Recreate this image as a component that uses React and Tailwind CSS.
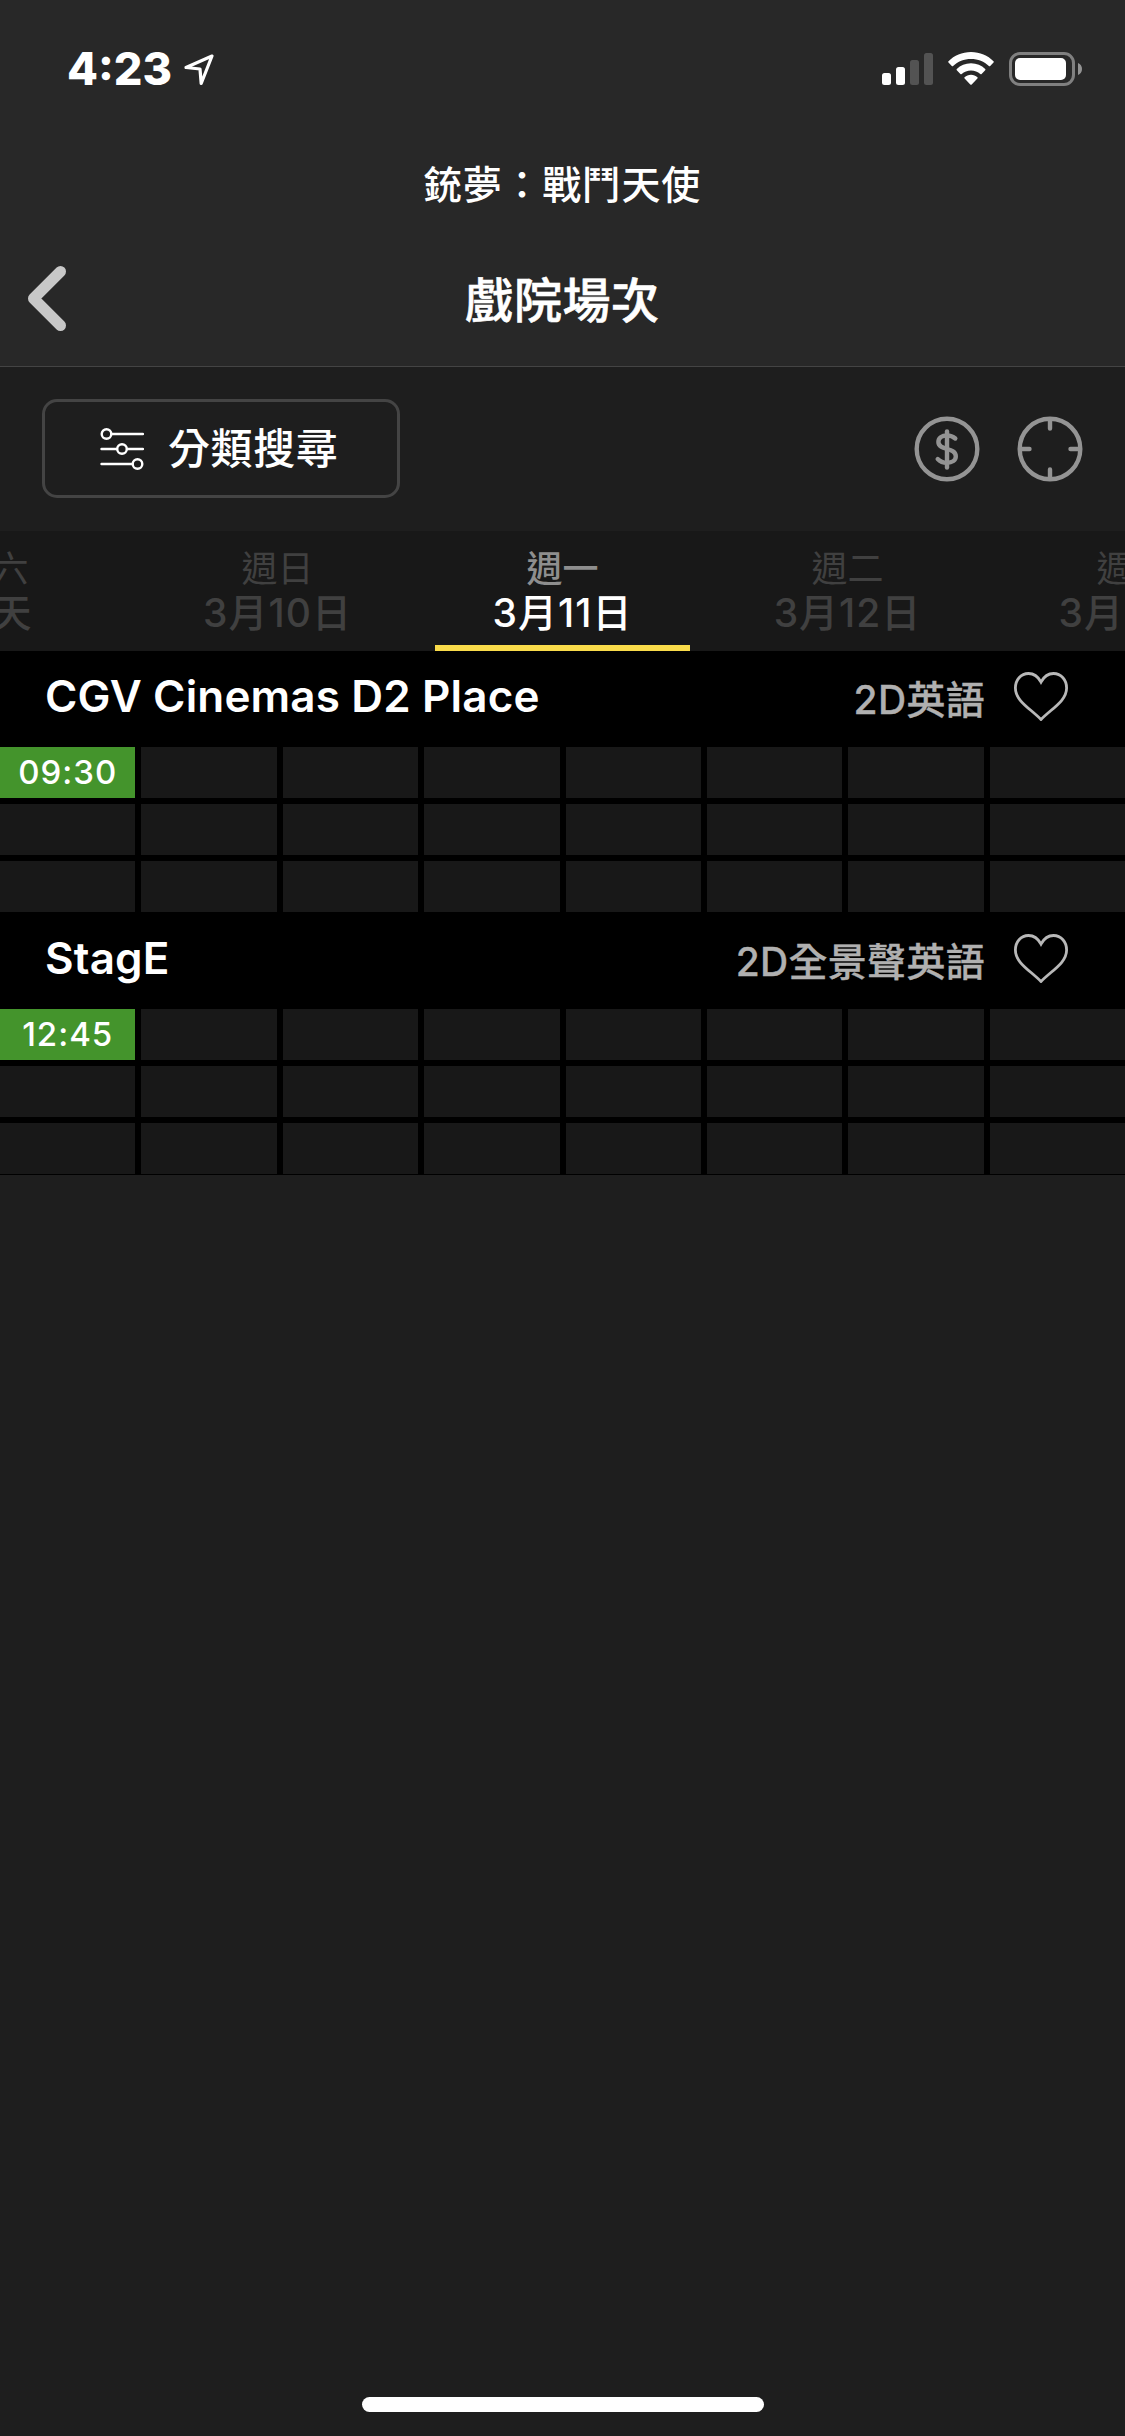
const days = [
  { weekday: '週六', date: '今天' },
  { weekday: '週日', date: '3月10日' },
  { weekday: '週一', date: '3月11日', active: true },
  { weekday: '週二', date: '3月12日' },
  { weekday: '週三', date: '3月13日' },
];

const cinemas = [
  { name: 'CGV Cinemas D2 Place', format: '2D英語', times: ['09:30'] },
  { name: 'StagE', format: '2D全景聲英語', times: ['12:45'] },
];

const SLOTS = 24;

function StatusBar() {
  return (
    <div className="flex h-[138px] items-start justify-between pt-[46px] pr-[42px] pl-[67px]">
      <div className="flex items-center">
        <span className="w-[106px] text-[45px] leading-[46px] font-extrabold whitespace-nowrap">4:23</span>
        <svg className="ml-[9px] h-[34px] w-[34px]" viewBox="0 0 34 34" fill="none" stroke="#fff" strokeWidth="3.2" strokeLinejoin="round">
          <path d="M30 4 4 15.500l14 1.500 1.200 14.500z" />
        </svg>
      </div>
      <div className="flex items-start pt-[6px]">
        <svg className="h-[34px] w-[51px]" viewBox="0 0 51 34" fill="#fff">
          <rect x="0" y="21" width="9" height="12" rx="2.5" />
          <rect x="14" y="15" width="9" height="18" rx="2.5" />
          <rect x="28" y="8" width="9" height="25" rx="2.5" fill="#535353" />
          <rect x="42" y="1" width="9" height="32" rx="2.5" fill="#535353" />
        </svg>
        <svg className="ml-[15px] h-[34px] w-[46px]" viewBox="0 0 46 34" fill="#fff">
          <path d="M23 0C14 0 6.300 3.500.5 9.200q-.6.700 0 1.300l3.300 3.500q.6.600 1.300 0C9.800 9.600 16 7 23 7s13.200 2.600 17.900 7q.7.600 1.300 0l3.300-3.500q.6-.6 0-1.300C39.700 3.500 32 0 23 0z" />
          <path d="M23 11.300c-5.600 0-10.600 2.200-14.200 5.700q-.6.600 0 1.300l3.600 3.700q.6.600 1.300 0c2.500-2.200 5.700-3.600 9.300-3.600s6.800 1.400 9.300 3.600q.7.600 1.300 0l3.600-3.700q.6-.7 0-1.300c-3.600-3.500-8.600-5.700-14.200-5.700z" />
          <path d="M23 22.800c-2.500 0-4.700.9-6.400 2.400q-.7.600 0 1.300l5.700 5.900q.7.700 1.400 0l5.700-5.900q.7-.7 0-1.300c-1.700-1.500-3.900-2.400-6.400-2.400z" />
        </svg>
        <svg className="ml-[15px] h-[34px] w-[74px]" viewBox="0 0 74 34">
          <rect x="1.500" y="1.500" width="63" height="31" rx="9.500" fill="none" stroke="#808080" strokeWidth="3" />
          <rect x="6" y="6" width="51" height="22" rx="5" fill="#fff" />
          <path d="M69 11c2.500 1 4 3.300 4 6s-1.500 5-4 6z" fill="#939393" />
        </svg>
      </div>
    </div>
  );
}

function Header() {
  return (
    <header className="border-b border-[#444] bg-[#282828]">
      <StatusBar />
      <p className="h-[92px] pr-px text-center text-[39px] leading-[93px] font-medium tracking-[0.7px]">銃夢：戰鬥天使</p>
      <div className="grid h-[136px] grid-cols-[1fr_auto_1fr] items-start">
        <button className="mt-[35px] ml-[26px] w-[44px]" aria-label="返回">
          <svg className="h-[68px] w-[44px]" viewBox="0 0 44 68" fill="none" stroke="#c8c8c8" strokeWidth="11" strokeLinecap="round" strokeLinejoin="round">
            <path d="M34.500 6.500 7.500 33.500l27 27" />
          </svg>
        </button>
        <h1 className="text-[48px] leading-[142px] font-medium tracking-[0.6px] [-webkit-text-stroke:0.6px_white]">戲院場次</h1>
      </div>
    </header>
  );
}

function Toolbar() {
  return (
    <div className="flex h-[164px] items-start justify-between pt-[32px] pr-[42px] pl-[42px]">
      <button className="flex h-[99px] w-[358px] items-center rounded-[15px] border-[3px] border-[#444] pl-[55px]">
        <svg className="h-[44px] w-[44px]" viewBox="0 0 44 44" fill="none" stroke="#fff" strokeWidth="2.400" strokeLinecap="round">
          <circle cx="6.500" cy="7" r="4.800" />
          <path d="M11.500 7H43" />
          <circle cx="22" cy="22" r="4.800" />
          <path d="M1.500 22H17M27 22h16" />
          <circle cx="37.500" cy="37" r="4.800" />
          <path d="M1.500 37h31" />
        </svg>
        <span className="ml-[24px] text-[42px] leading-[60px] font-medium tracking-[0.6px]">分類搜尋</span>
      </button>
      <div className="flex gap-[37px] pt-[17px]">
        <svg className="h-[66px] w-[66px]" viewBox="0 0 66 66" fill="none" stroke="#949494" strokeWidth="4.400" strokeLinecap="round">
          <circle cx="33" cy="33" r="30.300" />
          <path d="M33 15.500v36" />
          <path d="M41.300 22.500c-2.300-2-5-3-8.300-3-5.200 0-8.600 2.600-8.600 6.500 0 9 17.400 5 17.400 14.200 0 4.200-3.700 6.600-8.800 6.600-3.600 0-6.700-1-9.300-3.800" />
        </svg>
        <svg className="h-[66px] w-[66px]" viewBox="0 0 66 66" fill="none" stroke="#949494" strokeWidth="4.400" strokeLinecap="round">
          <circle cx="33" cy="33" r="30.300" />
          <path d="M33 4v8.500M33 53.500V62M4 33h8.500M53.500 33H62" />
        </svg>
      </div>
    </div>
  );
}

function DayTabs() {
  return (
    <nav className="flex h-[120px] justify-center gap-[30px] overflow-hidden bg-[#181818]">
      {days.map((day) => (
        <button
          key={day.weekday}
          className={`flex w-[255px] shrink-0 flex-col items-center border-b-[6px] pt-[16px] ${
            day.active ? 'border-[#f9db4a] text-white' : 'border-transparent text-[#404040]'
          }`}
        >
          <span className={`text-[36px] leading-[44px] ${day.active ? 'font-medium text-[#8e8e8e]' : ''}`}>{day.weekday}</span>
          <span className="text-[39px] leading-[43px] font-medium tracking-[1px] whitespace-nowrap">{day.date}</span>
        </button>
      ))}
    </nav>
  );
}

function Cinema({ name, format, times }) {
  return (
    <section className="bg-black pb-px">
      <div className="flex h-[96px] items-start pt-[15px] pr-[56px] pl-[45px]">
        <h2 className="text-[44px] leading-[60px] font-semibold tracking-[0.15px]">{name}</h2>
        <span className="mt-[4px] ml-auto text-[39px] leading-[60px] font-medium tracking-[0.3px] text-[#b0b0b0] [-webkit-text-stroke:0.3px_#b0b0b0]">
          {format}
        </span>
        <svg className="mt-[5px] ml-[28px] h-[50px] w-[56px]" viewBox="0 0 56 50" fill="none" stroke="#b8b8b8" strokeWidth="2.800">
          <path d="M28 11C25 5.500 20.500 2.500 15.500 2.500 7.800 2.500 2.400 8.900 2.400 17c0 13 15 20.500 25.600 31.500C38.600 37.500 53.600 30 53.600 17c0-8.100-5.400-14.500-13.100-14.500C35.500 2.500 31 5.500 28 11z" />
        </svg>
      </div>
      <div className="grid grid-cols-8 gap-[6px]">
        {Array.from({ length: SLOTS }, (_, i) => (
          <div
            key={i}
            className={`flex h-[51px] items-center justify-center text-[33px] font-medium tracking-[1px] ${
              times[i] ? 'bg-[#44942c]' : 'bg-[#181818]'
            }`}
          >
            {times[i]}
          </div>
        ))}
      </div>
    </section>
  );
}

export default function App() {
  return (
    <div className="flex h-[2436px] w-[1125px] flex-col overflow-hidden bg-[#1e1e1e] font-['Inter','Noto_Sans_CJK_TC',sans-serif] text-white">
      <Header />
      <Toolbar />
      <DayTabs />
      <main>
        {cinemas.map((cinema) => (
          <Cinema key={cinema.name} {...cinema} />
        ))}
      </main>
      <div className="mx-auto mt-auto mb-[24px] h-[15px] w-[402px] rounded-full bg-white" />
    </div>
  );
}
